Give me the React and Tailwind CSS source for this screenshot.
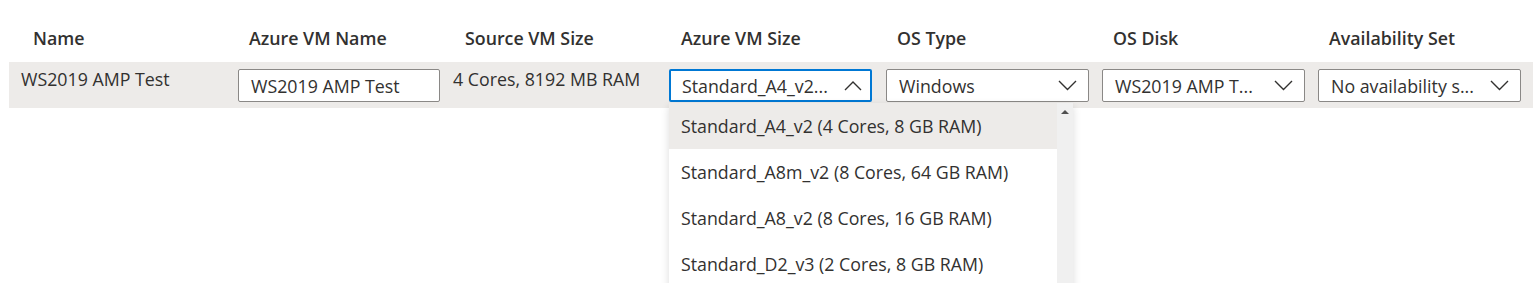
import React from "react";

const FONT = { fontFamily: '"Open Sans", "Noto Sans", sans-serif' };

function ChevronDown() {
  return (
    <svg width="19" height="11" viewBox="0 0 19 11" fill="none" className="shrink-0">
      <path d="M1 1 L9.5 9.5 L18 1" stroke="#323130" strokeWidth="1.4" strokeLinejoin="miter" />
    </svg>
  );
}

function ChevronUp() {
  return (
    <svg width="18" height="11" viewBox="0 0 18 11" fill="none" className="shrink-0">
      <path d="M1 10 L9 2 L17 10" stroke="#323130" strokeWidth="1.4" strokeLinejoin="miter" />
    </svg>
  );
}

function Select({ value, open }) {
  return (
    <div
      className={
        "flex h-[33px] w-[203px] items-center justify-between rounded-[2px] bg-white " +
        (open ? "border-2 border-[#0078d4] pl-[11px] pr-[8px]" : "ml-px border border-[#8a8886] pl-3 pr-[11px]")
      }
    >
      <span className="whitespace-nowrap">{value}</span>
      {open ? <ChevronUp /> : <ChevronDown />}
    </div>
  );
}

const headers = ["Name", "Azure VM Name", "Source VM Size", "Azure VM Size", "OS Type", "OS Disk", "Availability Set"];

const options = [
  "Standard_A4_v2 (4 Cores, 8 GB RAM)",
  "Standard_A8m_v2 (8 Cores, 64 GB RAM)",
  "Standard_A8_v2 (8 Cores, 16 GB RAM)",
  "Standard_D2_v3 (2 Cores, 8 GB RAM)",
];

export default function App() {
  return (
    <div className="relative h-[283px] w-[1536px] overflow-hidden bg-white text-[17.8px] text-[#323130]" style={FONT}>
      <div className="ml-[9px] w-[1524px] pl-3 pt-[26px]">
        <div className="grid grid-cols-[repeat(7,216px)] font-semibold leading-6">
          {headers.map((h) => (
            <div key={h} className="pl-3 whitespace-nowrap">
              {h}
            </div>
          ))}
        </div>
      </div>

      <div className="ml-[9px] mt-3 h-[46px] w-[1524px] bg-[#edebe9] pl-3">
        <div className="grid grid-cols-[repeat(7,216px)] leading-6">
          <div className="pt-[5px] whitespace-nowrap">WS2019 AMP Test</div>
          <div className="pt-[7px]">
            <div className="ml-px flex h-[33px] w-[202px] items-center rounded-[2px] border border-[#8a8886] bg-white px-3 whitespace-nowrap">
              WS2019 AMP Test
            </div>
          </div>
          <div className="pt-[5px] whitespace-nowrap">4 Cores, 8192 MB RAM</div>
          <div className="pt-[7px]">
            <Select value="Standard_A4_v2..." open />
          </div>
          <div className="pt-[7px]">
            <Select value="Windows" />
          </div>
          <div className="pt-[7px]">
            <Select value="WS2019 AMP T..." />
          </div>
          <div className="pt-[7px]">
            <Select value="No availability s..." />
          </div>
        </div>
      </div>

      {/* dropdown menu */}
      <div className="absolute left-[669px] top-[103px] flex h-[200px] w-[404px] bg-white shadow-[0_3px_8px_rgba(0,0,0,0.14)]">
        <div className="flex w-[388px] flex-col">
          {options.map((o, i) => (
            <div
              key={o}
              className={
                "flex h-[46px] shrink-0 items-center whitespace-nowrap pl-3 " + (i === 0 ? "bg-[#edebe9]" : "bg-white")
              }
            >
              {o}
            </div>
          ))}
        </div>
        <div className="relative w-4 bg-[#f0f0f0]">
          <svg width="8" height="5" viewBox="0 0 8 5" className="absolute left-[4px] top-[6px]">
            <path d="M0 5 L4 1 L8 5 Z" fill="#505050" />
          </svg>
        </div>
      </div>
    </div>
  );
}
